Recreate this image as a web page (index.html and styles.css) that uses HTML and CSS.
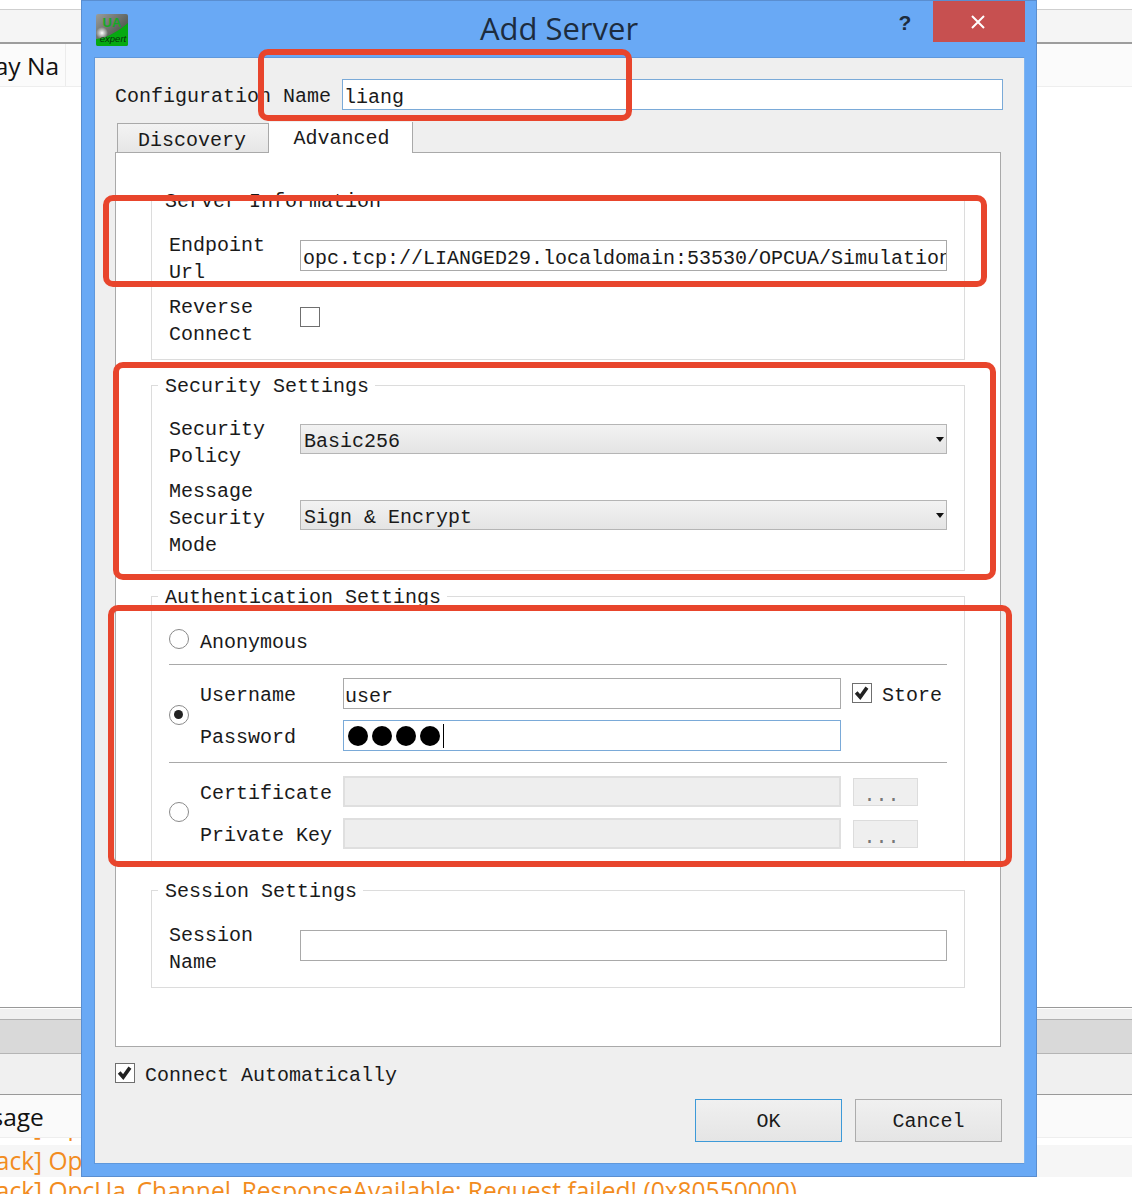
FILE: index.html
```html
<!DOCTYPE html>
<html lang="en">
<head>
<meta charset="utf-8">
<title>Add Server</title>
<link rel="stylesheet" href="styles.css">
</head>
<body>
<div class="desk">
  <div class="bar-top"></div>
  <div class="head-row"><div class="head-cell">Display Na</div></div>
  <div class="desk-fill"></div>
  <div class="bar-mid"></div>
  <div class="bar-grey"></div>
  <div class="bar-empty"></div>
  <div class="log-head">Message</div>
  <div class="log-row log-cut"><span>[UaStack] OpcUa</span></div>
  <div class="log-row log-alt">[UaStack] OpcUa_Channel</div>
  <div class="log-row log-last">[UaStack] OpcUa_Channel_ResponseAvailable: Request failed! (0x80550000)</div>
</div>

<div class="dialog">
  <div class="titlebar">
    <div class="title-left">
      <svg class="app-icon" viewBox="0 0 32 32" aria-hidden="true">
        <defs>
          <linearGradient id="iconbg" x1="0" y1="0" x2="1" y2="1">
            <stop offset="0" stop-color="#9a9d9b"/>
            <stop offset="0.7" stop-color="#50564f"/>
          </linearGradient>
          <radialGradient id="iconglow">
            <stop offset="0" stop-color="#ffffff"/>
            <stop offset="1" stop-color="#ffffff" stop-opacity="0"/>
          </radialGradient>
        </defs>
        <rect width="32" height="32" rx="2" fill="url(#iconbg)"/>
        <path d="M0 25 Q14 24 32 9 L32 30 Q32 32 30 32 L2 32 Q0 32 0 30 Z" fill="#06a911"/>
        <circle cx="6" cy="19" r="6" fill="url(#iconglow)"/>
        <text x="16" y="13" class="icon-ua">UA</text>
        <text x="17" y="28" class="icon-exp">expert</text>
      </svg>
    </div>
    <div class="title-text">Add Server</div>
    <div class="title-right">
      <div class="help">?</div>
      <div class="close">
        <svg viewBox="0 0 14 14" class="close-x" aria-hidden="true"><path d="M1 1 L13 13 M13 1 L1 13"/></svg>
      </div>
    </div>
  </div>

  <div class="content">
    <div class="config-row">
      <div class="config-label">Configuration Name</div>
      <div class="field field-blue config-field">liang</div>
    </div>

    <div class="tabs">
      <div class="tab">Discovery</div>
      <div class="tab tab-on">Advanced</div>
    </div>

    <div class="pane">
      <div class="group group-server">
        <div class="group-title">Server Information</div>
        <div class="form">
          <div class="form-row">
            <div class="form-label">Endpoint<br>Url</div>
            <div class="field field-endpoint">opc.tcp://LIANGED29.localdomain:53530/OPCUA/Simulation</div>
          </div>
          <div class="form-row">
            <div class="form-label">Reverse<br>Connect</div>
            <div class="check check-reverse"></div>
          </div>
        </div>
      </div>

      <div class="group group-security">
        <div class="group-title">Security Settings</div>
        <div class="form">
          <div class="form-row">
            <div class="form-label">Security<br>Policy</div>
            <div class="combo combo-policy">Basic256</div>
          </div>
          <div class="form-row">
            <div class="form-label">Message<br>Security<br>Mode</div>
            <div class="combo combo-mode">Sign &amp; Encrypt</div>
          </div>
        </div>
      </div>

      <div class="group group-auth">
        <div class="group-title">Authentication Settings</div>
        <div class="auth">
          <div class="anon">
            <div class="radio"></div>
            <div class="anon-label">Anonymous</div>
          </div>
          <div class="rule"></div>
          <div class="cred">
            <div class="radio radio-on cred-radio"></div>
            <div class="cred-label">Username</div>
            <div class="field">user</div>
            <div class="store">
              <div class="check check-on">
                <svg viewBox="0 0 20 20" aria-hidden="true"><path d="M3.5 9.5 L8 14.5 L15.5 4" /></svg>
              </div>
              <span>Store</span>
            </div>
            <div class="cred-label">Password</div>
            <div class="field field-blue field-pass">
              <span class="dot"></span><span class="dot"></span><span class="dot"></span><span class="dot"></span><span class="caret"></span>
            </div>
          </div>
          <div class="rule"></div>
          <div class="cred">
            <div class="radio cred-radio cred-radio-up"></div>
            <div class="cred-label">Certificate</div>
            <div class="field field-off"></div>
            <div class="more">...</div>
            <div class="cred-label">Private Key</div>
            <div class="field field-off"></div>
            <div class="more">...</div>
          </div>
        </div>
      </div>

      <div class="group group-session">
        <div class="group-title">Session Settings</div>
        <div class="form">
          <div class="form-row">
            <div class="form-label">Session<br>Name</div>
            <div class="field field-endpoint"></div>
          </div>
        </div>
      </div>
    </div>

    <div class="auto-row">
      <div class="check check-on">
        <svg viewBox="0 0 20 20" aria-hidden="true"><path d="M3.5 9.5 L8 14.5 L15.5 4" /></svg>
      </div>
      <span>Connect Automatically</span>
    </div>

    <div class="buttons">
      <div class="btn btn-default">OK</div>
      <div class="btn">Cancel</div>
    </div>
  </div>
</div>

<div class="mark mark-a"></div>
<div class="mark mark-b"></div>
<div class="mark mark-c"></div>
<div class="mark mark-d"></div>
</body>
</html>
```
FILE: styles.css
```css
* { box-sizing: border-box; }
html, body { margin: 0; padding: 0; }
body {
  width: 1132px;
  height: 1194px;
  overflow: hidden;
  position: relative;
  background: #fff;
  font-family: "Liberation Mono", "Noto Sans CJK SC", monospace;
  font-size: 20px;
  color: #1a1a1a;
}

/* background application */
.desk { display: flex; flex-direction: column; height: 1194px; font-family: "Open Sans", "Noto Sans", sans-serif; overflow: hidden; }
.desk > div { flex: none; }
.bar-top { height: 35px; margin-top: 9px; background: #f5f5f5; border-top: 1px solid #cfcfcf; border-bottom: 2px solid #9d9d9d; }
.head-row { height: 43px; background: #fbfbfb; border-bottom: 1px solid #eeeeee; }
.head-cell { width: 66px; height: 42px; padding-right: 6px; border-right: 1px solid #ececec; font-size: 24.5px; line-height: 43px; color: #111; white-space: nowrap; overflow: hidden; direction: rtl; text-align: left; }
.desk-fill { height: 920px; }
.bar-mid { height: 13px; background: #f0f0f0; border-top: 1px solid #999; border-bottom: 1px solid #b0b0b0; box-shadow: inset 0 1px 0 #fff; }
.bar-grey { height: 34px; background: #d9d9d9; border-bottom: 1px solid #b5b5b5; }
.bar-empty { height: 41px; background: #f0f0f0; border-bottom: 1px solid #999; }
.log-head { height: 43px; background: #fafafa; border-bottom: 1px solid #eeeeee; font-size: 24.5px; line-height: 43px; color: #111; margin-left: -56px; }
.log-row { font-size: 24.56px; color: #f28c1e; white-space: nowrap; margin-left: -66px; }
.log-cut { height: 7px; overflow: hidden; background: #fff; }
.log-cut span { display: block; margin-top: -12px; line-height: 0; }
.log-alt { height: 32px; line-height: 31px; background: #f6f6f6; }
.log-last { height: 31px; line-height: 27px; }

/* dialog window */
.dialog {
  position: absolute;
  left: 81px;
  top: 0;
  width: 956px;
  height: 1177px;
  background: #69a9f5;
  border: 1px solid #5a8ed0;
  padding: 0 11px 0 12px;
}
.titlebar { height: 56px; display: grid; grid-template-columns: 1fr auto 1fr; align-items: start; }
.title-left { display: flex; }
.title-right { display: flex; justify-content: flex-end; }
.app-icon { width: 32px; height: 32px; margin: 13px 0 0 2px; flex: none; }
.icon-ua { font-family: "Liberation Sans", sans-serif; font-size: 13px; font-weight: 700; fill: #17a826; text-anchor: middle; }
.icon-exp { font-family: "Liberation Sans", sans-serif; font-size: 9.5px; font-style: italic; fill: #06300a; text-anchor: middle; }
.title-text { text-align: center; font-family: "Open Sans", "Noto Sans", sans-serif; font-size: 31px; line-height: 55px; color: #1d2c3e; white-space: nowrap; padding-right: 1px; }
.help { width: 20px; margin-right: 18px; margin-top: 10px; font-family: "Liberation Sans", sans-serif; font-weight: 700; font-size: 21px; line-height: 24px; text-align: center; color: #1d2c3e; flex: none; }
.close { width: 92px; height: 41px; background: #c75050; flex: none; display: flex; align-items: center; justify-content: center; padding-right: 2px; }
.close-x { width: 14px; height: 14px; }
.close-x path { stroke: #fff; stroke-width: 2; fill: none; }

.content {
  height: 1107px;
  background: #efefef;
  border: 1px solid #5f98dc;
  border-right-color: #7fb4f0;
  padding: 21px 21px 0 20px;
}

/* controls */
.field {
  height: 31px;
  background: #fff;
  border: 1px solid #a9a9a9;
  font-size: 20px;
  line-height: 35px;
  padding-left: 1px;
  color: #1a1a1a;
  white-space: nowrap;
  overflow: hidden;
}
.field-blue { border-color: #7aaad8; }
.field-off { background: #eeeeee; border: 2px solid #dfdfdf; }
.field-endpoint { margin-top: 8px; padding-left: 2px; }

.config-row { display: flex; align-items: center; height: 31px; }
.config-label { width: 227px; flex: none; line-height: 33px; padding-top: 4px; }
.config-field { flex: 1; }

.tabs { display: flex; align-items: flex-end; height: 31px; margin-top: 12px; padding-left: 2px; position: relative; z-index: 1; }
.tab {
  width: 152px;
  height: 30px;
  line-height: 33px;
  padding-right: 2px;
  text-align: center;
  background: linear-gradient(#f3f3f3, #e6e6e6);
  border: 1px solid #a9a9a9;
}
.tab-on { width: 144px; height: 31px; line-height: 34px; padding: 0 0 0 2px; background: #fff; border-top: none; border-left: none; border-bottom: none; }

.pane {
  width: 886px;
  height: 895px;
  margin-top: -1px;
  background: #fff;
  border: 1px solid #a9a9a9;
  padding: 47px 0 0 35px;
}

.group { width: 814px; border: 1px solid #dcdcdc; margin-bottom: 25px; }
.group-server { height: 160px; }
.group-security { height: 186px; }
.group-auth { height: 269px; }
.group-session { height: 98px; margin-bottom: 0; }
.group-title {
  width: fit-content;
  height: 24px;
  margin: -12px 0 0 6px;
  padding: 0 6px 0 7px;
  background: #fff;
  line-height: 26px;
  white-space: nowrap;
}

.form { padding: 18px 17px 0; display: flex; flex-direction: column; gap: 8px; }
.group-server .form, .group-session .form { padding-top: 19px; }
.form-row { display: grid; grid-template-columns: 131px 1fr; align-items: start; }
.form-label { line-height: 27px; }

.combo {
  height: 30px;
  background: linear-gradient(#f2f2f2, #e4e4e4);
  border: 1px solid #b5b5b5;
  line-height: 33px;
  padding-left: 3px;
  position: relative;
}
.combo::after {
  content: "";
  position: absolute;
  right: 2px;
  top: 12px;
  border: 4px solid transparent;
  border-top: 5px solid #111;
  border-bottom: none;
}
.combo-policy { margin-top: 8px; }
.combo-mode { margin-top: 22px; }

.check {
  width: 20px;
  height: 20px;
  background: #fff;
  border: 1px solid #6f6f6f;
  flex: none;
}
.check-reverse { margin-top: 13px; }
.check svg { display: block; width: 18px; height: 18px; }
.check svg path { fill: none; stroke: #222; stroke-width: 4; }

.radio {
  width: 20px;
  height: 20px;
  border-radius: 50%;
  background: #fff;
  border: 1.5px solid #8a8a8a;
  flex: none;
  position: relative;
}
.radio-on::after {
  content: "";
  position: absolute;
  left: 4px;
  top: 4px;
  width: 9px;
  height: 9px;
  border-radius: 50%;
  background: #222;
}

.auth { padding: 15px 17px 0; }
.anon { display: flex; align-items: center; height: 30px; gap: 11px; }
.anon-label { padding-top: 8px; line-height: 26px; }
.rule { height: 1px; margin-top: 10px; background: #a9a9a9; }
.auth .rule ~ .rule { margin-top: 11px; }
.cred {
  margin-top: 13px;
  display: grid;
  grid-template-columns: 31px 143px 498px 1fr;
  grid-template-rows: 31px 31px;
  row-gap: 11px;
  align-items: center;
}
.cred-radio { grid-row: 1 / 3; grid-column: 1; }
.cred-radio-up { margin-top: -2px; }
.cred-label { grid-column: 2; line-height: 36px; height: 31px; }
.store { display: flex; align-items: center; gap: 10px; margin-left: 11px; }
.store .check { margin-top: -1px; }
.store span { padding-top: 3px; }
.field-pass { display: flex; align-items: center; gap: 4px; padding-left: 4px; }
.dot { width: 20px; height: 20px; border-radius: 50%; background: #000; flex: none; }
.caret { width: 1px; height: 24px; background: #000; margin-left: -1px; }
.more {
  width: 65px;
  height: 28px;
  margin-left: 12px;
  padding-right: 8px;
  background: #efefef;
  border: 1px solid #dcdcdc;
  color: #777;
  text-align: center;
  line-height: 34px;
}

.auto-row { display: flex; align-items: center; gap: 10px; height: 20px; margin-top: 16px; }
.auto-row span { padding-top: 4px; }
.buttons { display: flex; justify-content: flex-end; gap: 13px; margin-top: 16px; padding-right: 1px; }
.btn {
  width: 147px;
  height: 43px;
  background: linear-gradient(#f0f0f0, #e5e5e5);
  border: 1px solid #acacac;
  text-align: center;
  line-height: 44px;
}
.btn-default { border-color: #3d9ad8; }

/* hand-drawn annotation rectangles lying over the screenshot */
.mark { position: absolute; border: 6px solid #e8452c; border-radius: 10px; }
.mark-a { left: 258px; top: 49px; width: 374px; height: 72px; }
.mark-b { left: 103px; top: 195px; width: 884px; height: 92px; }
.mark-c { left: 113px; top: 362px; width: 883px; height: 218px; }
.mark-d { left: 108px; top: 605px; width: 904px; height: 262px; }
```
